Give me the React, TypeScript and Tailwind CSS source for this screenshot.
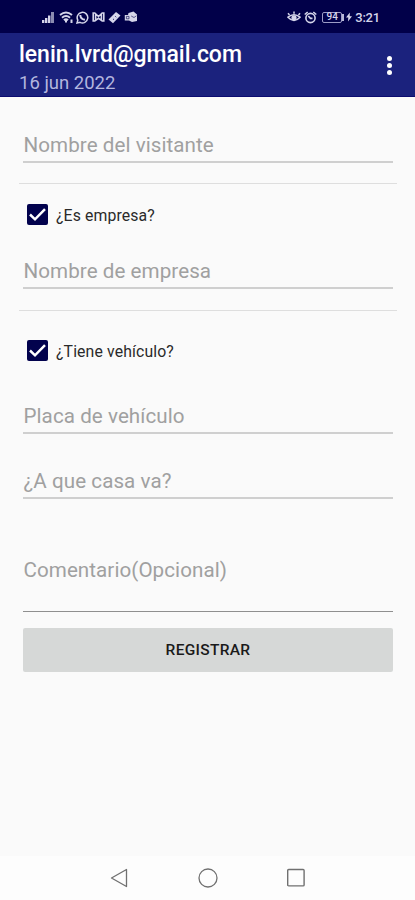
import { useState } from 'react';
import clsx from 'clsx';

interface FieldProps {
  label: string;
  className?: string;
}

function Field({ label, className }: FieldProps) {
  return (
    <div className={clsx('ml-[23px] mr-[22px] border-b-2 border-[#cfcfcf] pb-1', className)}>
      <span className="block pl-[0.5px] text-[20.6px] leading-6 tracking-[0.06px] text-[#a0a0a0]">{label}</span>
    </div>
  );
}

interface CheckFieldProps {
  label: string;
  className?: string;
}

function CheckField({ label, className }: CheckFieldProps) {
  const [checked, setChecked] = useState(true);

  return (
    <button
      type="button"
      role="checkbox"
      aria-checked={checked}
      onClick={() => setChecked(!checked)}
      className={clsx('ml-[27px] flex h-[21px] items-center gap-2', className)}
    >
      <span className="flex h-[21px] w-[21px] items-center justify-center rounded-[2px] bg-[#02024d]">
        {checked && (
          <svg viewBox="0 0 21 21" className="h-[21px] w-[21px]" fill="none" stroke="#fff" strokeWidth="2.5">
            <path d="M3 10.5 L8 15.3 L18 5.2" />
          </svg>
        )}
      </span>
      <span className="pt-0.5 text-[15.8px] leading-5 tracking-[0.12px] text-[#2a2a2a]">{label}</span>
    </button>
  );
}

function StatusBar() {
  return (
    <div className="flex h-[33px] items-center justify-between bg-[#010049] pl-[42px] pr-[35px] pt-px text-[#d5d5ea]">
      <div className="flex items-center gap-[3px]">
        {/* signal */}
        <svg viewBox="0 0 13 12" className="h-3 w-[13px]" fill="currentColor">
          <path d="M0 9h2.4v3H0z M3 7h2.4v5H3z M6 4.5h2.4v7.5H6z" />
          <path d="M9 1h3v11H9z" opacity=".65" />
        </svg>
        {/* wifi */}
        <svg viewBox="0 0 15 12" className="ml-px h-3 w-[15px]" fill="none" stroke="currentColor" strokeWidth="2">
          <path d="M1 4 Q7 -1 13 4 M3 6.7 Q7 3.2 11 6.7 M5 9.2 Q7 7.2 9 9.2" />
          <path d="M7 9v2.5 M12.5 8.5v3.5" />
        </svg>
        {/* whatsapp */}
        <svg viewBox="0 0 13 13" className="-ml-px h-[13px] w-[13px]" fill="none" stroke="currentColor" strokeWidth="1.5">
          <path d="M1 12 L1.8 9.1 A5.3 5.3 0 1 1 4 11.3 Z" />
          <path d="M4.3 4 Q4.4 8.1 8.9 8.8" strokeWidth="2" />
        </svg>
        {/* mail */}
        <svg viewBox="0 0 13 12" className="h-3 w-[13px]" fill="none" stroke="currentColor" strokeWidth="1.6">
          <path d="M1.2 10V2h1.6l3.7 3.5L10.2 2h1.6v8h-1.6L6.5 7.3 2.8 10z M3.6 3v6 M9.4 3v6" />
        </svg>
        {/* ticket */}
        <svg viewBox="0 0 13 13" className="h-[13px] w-[13px]" fill="currentColor">
          <path d="M0.5 8.5 L8 1 L12.5 4.5 L5 12.3 Z" />
          <path d="M5.2 8 L6 8.8 M7.4 5.4 L8.2 6.2" stroke="#010049" strokeWidth="1" />
        </svg>
        {/* outlook */}
        <svg viewBox="0 0 14 12" className="h-3 w-[14px]" fill="currentColor">
          <path d="M4.5 2 L9.5 0.5 L13 3.5 V10 L8 11 L5 9.5 H0.8 V4 H4 Z" />
          <path d="M2.4 5.4h2.6v2.4h-2.6z M7.2 5 L10 6.5 L12.4 4.8" fill="none" stroke="#010049" strokeWidth=".6" />
        </svg>
      </div>
      <div className="flex items-center">
        {/* eye comfort */}
        <svg viewBox="0 0 14 12" className="h-3 w-[14px]" fill="none" stroke="currentColor" strokeWidth="1.5">
          <path d="M1 6.2 Q7 1.2 13 6.2 Q7 12.8 1 6.2z M2.5 4 L1 2.2 M7 2.8V.5 M11.5 4 L13 2.2" />
          <circle cx="7" cy="6.8" r="1.9" fill="currentColor" />
        </svg>
        {/* alarm */}
        <svg viewBox="0 0 13 13" className="ml-[3px] h-[13px] w-[13px]" fill="none" stroke="currentColor" strokeWidth="1.6">
          <circle cx="6.5" cy="7" r="4.6" />
          <path d="M.7 3.5 L3.7 1 M9.3 1 L12.3 3.5 M4.3 5 L6.5 7.4 H8.5" />
        </svg>
        <span className="ml-[5px] flex h-[11px] w-[20px] items-center justify-center rounded-[2px] border border-[#9c9cc6] text-[10px] font-medium leading-none">
          94
        </span>
        <span className="h-[7px] w-[2px] bg-[#b9b9d8]" />
        {/* charging */}
        <svg viewBox="0 0 6 10" className="ml-[2px] h-[10px] w-[6px]" fill="currentColor">
          <path d="M3.8 0.5 L0 5.5 H2.3 L2 9.5 L6 4.2 H3.7z" />
        </svg>
        <span className="ml-[3px] text-[13px] font-medium leading-none tracking-[-0.2px]">3:21</span>
      </div>
    </div>
  );
}

function AppBar() {
  return (
    <header className="flex h-16 justify-between border-b border-[#0c0c70] bg-[#1b227d] pl-[19px] pr-[23px]">
      <div className="pt-2">
        <h1 className="text-[23px] font-medium leading-7 tracking-[-0.03px] text-white">lenin.lvrd@gmail.com</h1>
        <p className="pt-px text-[18.5px] leading-[26px] text-[#b3b6df]">16 jun 2022</p>
      </div>
      <button type="button" aria-label="Menu" className="flex flex-col items-center justify-center gap-[2px] pt-[2px]">
        <span className="h-[5px] w-[5px] rounded-full bg-white" />
        <span className="h-[5px] w-[5px] rounded-full bg-white" />
        <span className="h-[5px] w-[5px] rounded-full bg-white" />
      </button>
    </header>
  );
}

function NavBar() {
  return (
    <nav className="flex h-11 items-center justify-center gap-[68px] bg-[#fdfdfd]">
      <svg viewBox="0 0 20 20" className="h-5 w-5" fill="none" stroke="#707070" strokeWidth="1.3" strokeLinejoin="round">
        <path d="M1.5 10 L16.5 1.5 V18.5 Z" />
      </svg>
      <svg viewBox="0 0 20 20" className="h-5 w-5" fill="none" stroke="#707070" strokeWidth="1.3">
        <circle cx="10" cy="10" r="9" />
      </svg>
      <svg viewBox="0 0 20 20" className="h-5 w-5" fill="none" stroke="#707070" strokeWidth="1.4">
        <rect x="1.7" y="1.5" width="16.4" height="16.4" rx="1" />
      </svg>
    </nav>
  );
}

export default function App() {
  return (
    <div className="flex h-[900px] w-[415px] flex-col bg-[#fafafa] font-[Roboto,sans-serif]">
      <StatusBar />
      <AppBar />
      <main className="flex flex-1 flex-col">
        <Field label="Nombre del visitante" className="mt-9" />
        <div className="ml-[19px] mr-[18px] mt-5 h-px bg-[#dedede]" />
        <CheckField label="¿Es empresa?" className="mt-5" />
        <Field label="Nombre de empresa" className="mt-[34px]" />
        <div className="ml-[19px] mr-[18px] mt-[21px] h-px bg-[#dedede]" />
        <CheckField label="¿Tiene vehículo?" className="mt-[29px]" />
        <Field label="Placa de vehículo" className="mt-[43px]" />
        <Field label="¿A que casa va?" className="mt-[35px]" />
        <div className="ml-[23px] mr-[22px] mt-[59px] h-[54px] border-b border-[#8f8f8f]">
          <span className="block pl-[0.5px] text-[20.6px] leading-6 tracking-[0.06px] text-[#a0a0a0]">
            Comentario(Opcional)
          </span>
        </div>
        <button
          type="button"
          className="ml-[23px] mr-[22px] mt-4 h-11 rounded-[2px] bg-[#d6d8d7] pt-px text-[15.5px] font-medium tracking-[0.3px] text-[#1a1a1a]"
        >
          REGISTRAR
        </button>
      </main>
      <NavBar />
    </div>
  );
}
